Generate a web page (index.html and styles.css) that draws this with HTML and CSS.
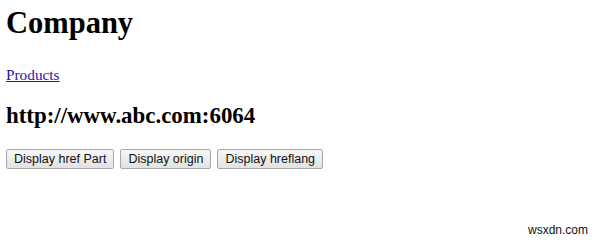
FILE: index.html
```html
<!DOCTYPE html>
<html lang="en">
<head>
    <meta charset="UTF-8">
    <title>Company</title>
    <link rel="stylesheet" href="styles.css">
</head>
<body>
    <h1 class="title">Company</h1>

    <p class="links"><a href="#" id="products" hreflang="en-US">Products</a></p>

    <h2 class="result" id="result">http://www.abc.com:6064</h2>

    <div class="actions">
        <button class="btn">Display href Part</button>
        <button class="btn">Display origin</button>
        <button class="btn">Display hreflang</button>
    </div>

    <span class="watermark">wsxdn.com</span>
</body>
</html>
```

FILE: styles.css
```css
html, body {
    height: 100%;
}

body {
    margin: 0;
    padding: 0 6px;
    font-family: "Liberation Serif", "Times New Roman", serif;
    color: #000;
    background: #fff;
    position: relative;
    overflow: hidden;
}

.title {
    margin: 6px 0 25px;
    font-size: 30.5px;
    font-weight: bold;
}

.links {
    margin: 0 0 18.5px;
    font-size: 15.3px;
}

.links a {
    color: #2419a6;
}

.result {
    margin: 0 0 20.5px;
    font-size: 22.9px;
    font-weight: bold;
}

.actions {
    display: flex;
    gap: 6px;
}

/* Кнопки */
.btn {
    font-family: "Liberation Sans", Arial, sans-serif;
    font-size: 12.5px;
    line-height: 16px;
    color: #111;
    padding: 1px 7px;
    border: 1px solid #a8a8a8;
    border-radius: 2px;
    background: linear-gradient(#f7f7f7, #e2e2e2);
    cursor: pointer;
}

.watermark {
    position: absolute;
    right: 12px;
    bottom: 3px;
    font-family: "Liberation Sans", Arial, sans-serif;
    font-size: 12px;
    color: #111;
}
```
